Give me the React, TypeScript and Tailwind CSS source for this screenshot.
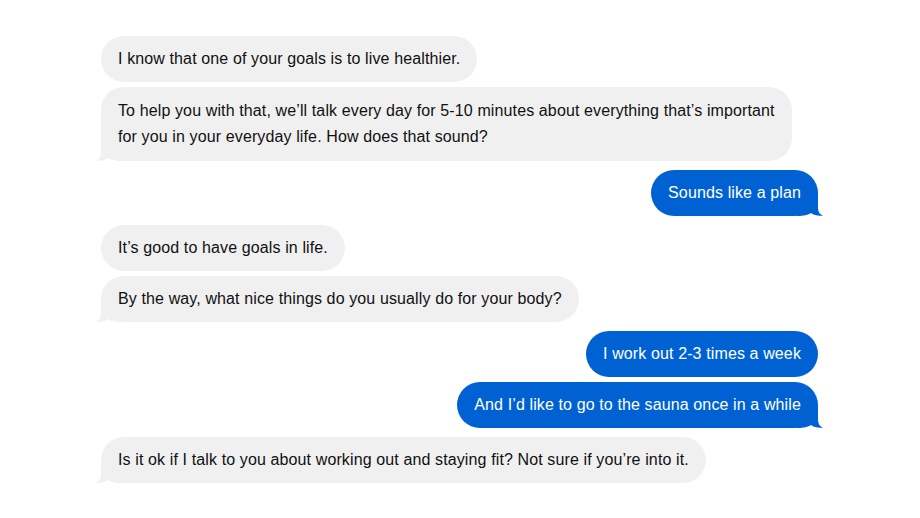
import React from 'react';

type Msg = { lines: string[]; me: boolean; tail?: boolean; first?: boolean };

const messages: Msg[] = [
    { lines: ['I know that one of your goals is to live healthier.'], me: false, first: true },
    {
        lines: [
            'To help you with that, we’ll talk every day for 5-10 minutes about everything that’s important',
            'for you in your everyday life. How does that sound?',
        ],
        me: false,
        tail: true,
    },
    { lines: ['Sounds like a plan'], me: true, tail: true, first: true },
    { lines: ['It’s good to have goals in life.'], me: false, first: true },
    { lines: ['By the way, what nice things do you usually do for your body?'], me: false, tail: true },
    { lines: ['I work out 2-3 times a week'], me: true, first: true },
    { lines: ['And I’d like to go to the sauna once in a while'], me: true, tail: true },
    { lines: ['Is it ok if I talk to you about working out and staying fit? Not sure if you’re into it.'], me: false, tail: true, first: true },
];

const Tail: React.FC<{ me: boolean }> = ({ me }) => (
    <svg
        width="26"
        height="22"
        viewBox="0 0 26 22"
        className={`absolute bottom-0 ${me ? 'right-[-5px] -scale-x-100' : 'left-[-5px]'}`}
    >
        <path
            d="M5 0 L5 14 C5 18 3 20.5 0 21.5 C4 22.3 9 21.5 12 19 C15 21 19 22 26 22 L26 0 Z"
            fill={me ? '#0062d2' : '#f0f0f0'}
        />
    </svg>
);

const Bubble: React.FC<{ msg: Msg }> = ({ msg }) => (
    <div className={`flex ${msg.me ? 'justify-end' : 'justify-start'} ${msg.first ? 'mt-[9px]' : 'mt-[5px]'} first:mt-0`}>
        <div
            className={`relative rounded-[23px] px-[17px] ${msg.lines.length > 1 ? 'py-[11px]' : 'py-[10px]'} text-[16px] leading-[26px] tracking-[0.12px] whitespace-nowrap ${
                msg.me ? 'bg-[#0062d2] text-white' : 'bg-[#f0f0f0] text-[#111111]'
            }`}
        >
            {msg.tail && <Tail me={msg.me} />}
            <div className="relative">
                {msg.lines.map((l, i) => (
                    <div key={i}>{l}</div>
                ))}
            </div>
        </div>
    </div>
);

const App: React.FC = () => {
    return (
        <div
            className="w-[920px] h-[518px] bg-white overflow-hidden pt-[36px] pl-[101px] pr-[102px]"
            style={{ fontFamily: '"Liberation Sans", Arial, sans-serif' }}
        >
            <div className="flex flex-col">
                {messages.map((m, i) => (
                    <Bubble key={i} msg={m} />
                ))}
            </div>
        </div>
    );
};

export default App;
